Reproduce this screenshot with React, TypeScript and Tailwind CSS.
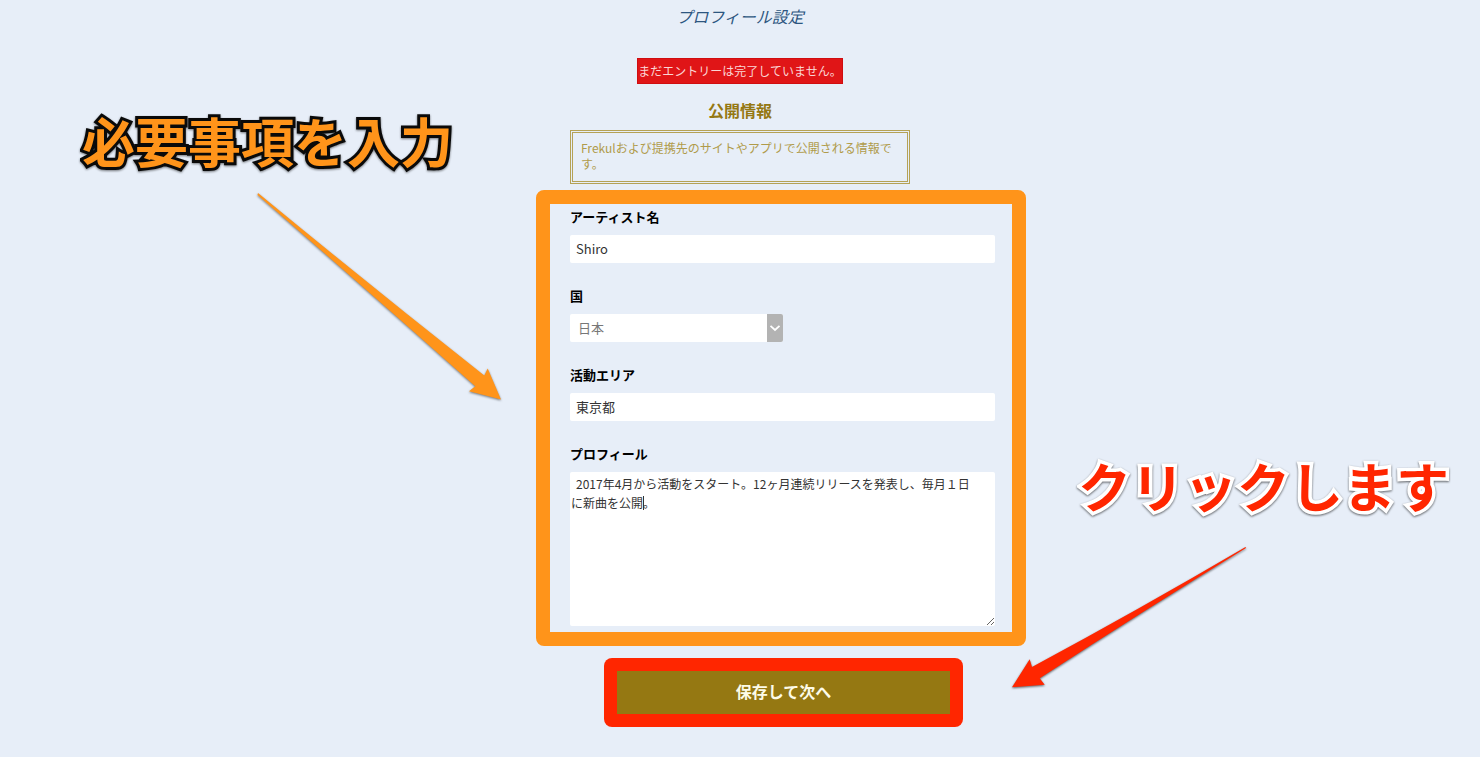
import type { ReactNode } from "react";

const inputClass =
  "block h-7 w-full rounded-xs border-0 bg-white px-1.5 pb-0.5 text-[13px] text-[#333] outline-none";

function Field({ id, label, children }: { id: string; label: string; children: ReactNode }) {
  return (
    <div className="flex flex-col gap-2">
      <label htmlFor={id} className="text-[13px] leading-5 font-bold text-black">
        {label}
      </label>
      {children}
    </div>
  );
}

function InputCallout() {
  return (
    <>
      <p className="absolute top-[100px] right-full mr-[117px] text-[53px] leading-[80px] font-bold whitespace-nowrap text-[#ff941a] drop-shadow-[0_1px_1px_rgba(0,0,0,0.5)] [paint-order:stroke_fill] [-webkit-text-stroke:6px_#0a0a0a]">
        必要事項を入力
      </p>
      <svg
        aria-hidden="true"
        width="260"
        height="220"
        viewBox="250 188 260 220"
        className="pointer-events-none absolute top-[188px] right-full mr-[60px] drop-shadow-[0_1px_1px_rgba(0,0,0,0.5)]"
      >
        <path
          d="M258 193 Q371 286 484.3 375.5 L487.7 368.5 L501 399.5 L469 391.3 L475.3 386.3 Q366 289 257.5 195 Z"
          fill="#ff941a"
        />
      </svg>
    </>
  );
}

function ClickCallout() {
  return (
    <>
      <p className="absolute top-[445px] left-full ml-[168px] text-[53px] leading-[80px] font-bold whitespace-nowrap text-[#ff2600] drop-shadow-[0_1px_1px_rgba(0,0,0,0.6)] [paint-order:stroke_fill] [-webkit-text-stroke:7px_white]">
        クリックします
      </p>
      <svg
        aria-hidden="true"
        width="250"
        height="155"
        viewBox="1005 540 250 155"
        className="pointer-events-none absolute top-[540px] left-full ml-[95px] drop-shadow-[0_1px_1px_rgba(0,0,0,0.6)]"
      >
        <path
          d="M1245.5 547 Q1138 610 1032 667 L1029.7 659.3 L1012 687.2 L1044.7 684.7 L1039.7 678.3 Q1143 611 1246 548 Z"
          fill="#ff2600"
        />
      </svg>
    </>
  );
}

export default function App() {
  return (
    <div
      lang="ja"
      className="min-h-screen overflow-x-clip bg-[#e7eef8] font-['Noto_Sans_CJK_JP',sans-serif]"
    >
      <main className="relative mx-auto flex max-w-[340px] flex-col pt-1.5 pb-10">
        <h1 className="text-center text-base leading-5 text-[#2d5680] italic">プロフィール設定</h1>
        <p className="mt-8 self-center border border-[#d00d10] bg-[#e01517] text-xs leading-6 whitespace-nowrap text-[#fbd5d5]">
          まだエントリーは完了していません。
        </p>
        <h2 className="mt-4 text-center text-base leading-5 font-bold text-[#957812]">
          公開情報
        </h2>
        <p className="mt-2.5 min-h-[54px] border-[3px] border-double border-[#b5a256] px-2 py-[7px] text-xs leading-4 text-[#b09b4a]">
          Frekulおよび提携先のサイトやアプリで公開される情報です。
        </p>

        <form className="mt-[23px] w-[425px]" onSubmit={(event) => event.preventDefault()}>
          <div className="relative flex flex-col gap-[23px]">
            <Field id="artist" label="アーティスト名">
              <input id="artist" type="text" defaultValue="Shiro" className={inputClass} />
            </Field>
            <Field id="country" label="国">
              <div className="relative w-[213px]">
                <select
                  id="country"
                  defaultValue="jp"
                  className="block h-7 w-full appearance-none rounded-xs border-0 bg-white pr-5 pl-2 text-[13px] text-[#777] outline-none"
                >
                  <option value="jp">日本</option>
                </select>
                <span className="pointer-events-none absolute inset-y-0 right-0 flex w-4 items-center justify-center rounded-r-xs bg-[#b3b3b3]">
                  <svg aria-hidden="true" width="12" height="8" viewBox="0 0 12 8">
                    <path d="M1.5 1.8 L6 6 L10.5 1.8" fill="none" stroke="white" strokeWidth="1.8" />
                  </svg>
                </span>
              </div>
            </Field>
            <Field id="area" label="活動エリア">
              <input id="area" type="text" defaultValue="東京都" className={inputClass} />
            </Field>
            <Field id="profile" label="プロフィール">
              <div className="relative">
                <textarea
                  id="profile"
                  defaultValue={
                    "2017年4月から活動をスタート。12ヶ月連続リリースを発表し、毎月１日\nに新曲を公開。"
                  }
                  className="block h-[154px] w-full resize rounded-xs border-0 bg-white px-px py-0.5 indent-[5px] text-xs leading-[19px] text-[#333] outline-none"
                />
                <span
                  aria-hidden="true"
                  className="pointer-events-none absolute top-6 left-[73px] h-3.5 w-px bg-[#333]"
                />
              </div>
            </Field>
            <div
              aria-hidden="true"
              className="pointer-events-none absolute -top-[17px] -right-[31px] -bottom-5 -left-[34px] rounded-lg border-[14px] border-[#ff941a]"
            />
          </div>

          <div className="mt-8 flex justify-center pl-0.5">
            <div className="rounded-lg bg-[#ff2600] p-[13px]">
              <button
                type="submit"
                className="block h-[43px] w-[333px] bg-[#957812] pb-1 text-base font-bold text-[#fdfbe8]"
              >
                保存して次へ
              </button>
            </div>
          </div>
        </form>

        <InputCallout />
        <ClickCallout />
      </main>
    </div>
  );
}
